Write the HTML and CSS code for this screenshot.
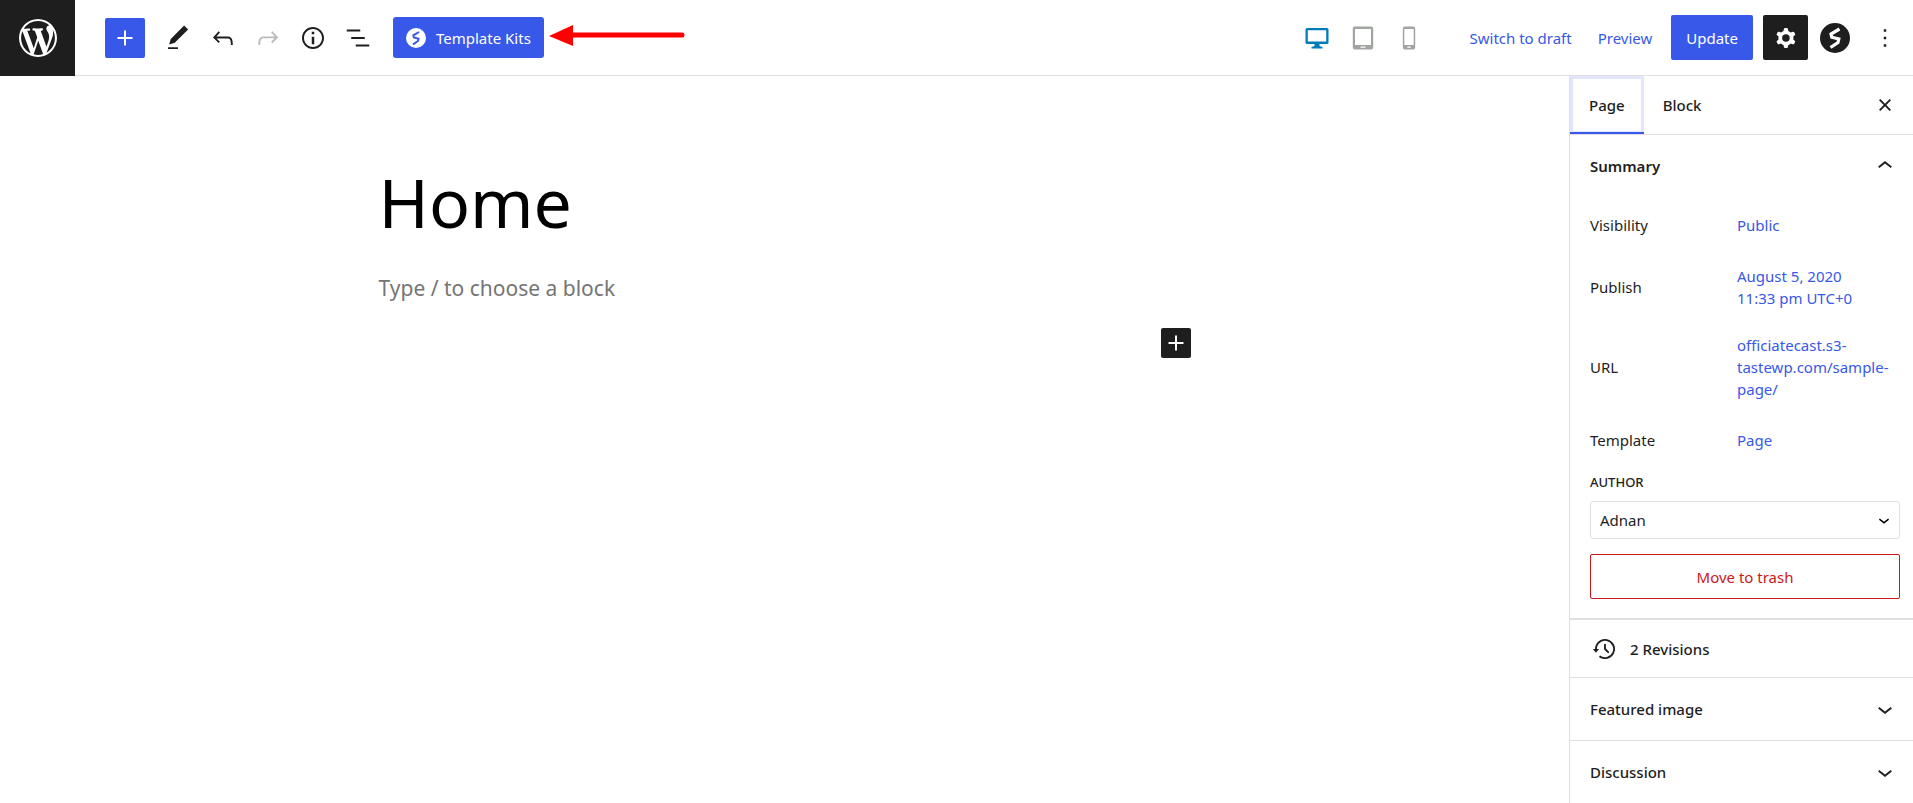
FILE: index.html
```html
<!DOCTYPE html>
<html lang="en">
<head>
    <meta charset="UTF-8">
    <meta name="viewport" content="width=device-width, initial-scale=1.0">
    <title>Edit Page</title>
    <link rel="stylesheet" href="styles.css">
</head>
<body>
    <header class="header">
        <a class="site-logo" href="#" aria-label="View Pages">
            <svg width="38" height="38" viewBox="0 0 20 20"><path d="M20 10c0-5.51-4.49-10-10-10C4.48 0 0 4.49 0 10c0 5.52 4.48 10 10 10 5.51 0 10-4.48 10-10zM7.78 15.37L4.37 6.22c.55-.02 1.17-.08 1.17-.08.5-.06.44-1.13-.06-1.11 0 0-1.45.11-2.37.11-.18 0-.37 0-.58-.01C4.12 2.69 6.87 1.11 10 1.11c2.33 0 4.45.87 6.05 2.34-.68-.11-1.65.39-1.65 1.58 0 .74.45 1.36.9 2.1.35.61.55 1.36.55 2.46 0 1.49-1.4 5-1.4 5l-3.03-8.37c.54-.02.82-.17.82-.17.5-.05.44-1.25-.06-1.22 0 0-1.44.12-2.38.12-.87 0-2.33-.12-2.33-.12-.5-.03-.56 1.2-.06 1.22l.92.08 1.26 3.41zM17.41 10c.24-.64.74-1.87.43-4.25.7 1.29 1.05 2.71 1.05 4.25 0 3.29-1.73 6.24-4.4 7.78.97-2.59 1.94-5.2 2.92-7.78zM6.1 18.09C3.12 16.65 1.11 13.53 1.11 10c0-1.3.23-2.48.72-3.59C3.25 10.3 4.67 14.2 6.1 18.09zm4.03-6.63l2.58 6.98c-.86.29-1.76.45-2.71.45-.79 0-1.57-.11-2.29-.33.81-2.38 1.62-4.74 2.42-7.1z"/></svg>
        </a>

        <div class="tools">
            <button class="inserter" aria-label="Add block">
                <svg class="icon" viewBox="0 0 24 24"><path d="M18 11.2h-5.2V6h-1.6v5.2H6v1.6h5.2V18h1.6v-5.2H18z"/></svg>
            </button>
            <button class="tool" aria-label="Tools">
                <svg class="icon" viewBox="0 0 24 24"><path d="M20.1 5.1L16.9 2 6.2 12.7l-1.3 4.4 4.5-1.3L20.1 5.1zM4 20.8h8v-1.5H4v1.5z"/></svg>
            </button>
            <button class="tool" aria-label="Undo">
                <svg class="icon" viewBox="0 0 24 24"><path d="M18.3 11.7c-.6-.6-1.4-.9-2.3-.9H6.7l2.9-3.3-1.1-1-4.5 5L8.5 16l1-1-2.7-2.7H16c.5 0 .9.2 1.3.5 1 1 1 3.4 1 4.5v.3h1.5v-.2c0-1.5 0-4.3-1.5-5.7z"/></svg>
            </button>
            <button class="tool tool-off" aria-label="Redo">
                <svg class="icon" viewBox="0 0 24 24"><path d="M15.6 6.5l-1.1 1 2.9 3.3H8c-.9 0-1.7.3-2.3.9-1.4 1.5-1.4 4.2-1.4 5.6v.2h1.5v-.3c0-1.1 0-3.5 1-4.5.3-.3.7-.5 1.3-.5h9.2L14.5 15l1.1 1.1 4.6-4.6-4.6-5z"/></svg>
            </button>
            <button class="tool" aria-label="Details">
                <svg class="icon" viewBox="0 0 24 24"><path d="M12 3.2c-4.8 0-8.8 3.9-8.8 8.8 0 4.8 3.9 8.8 8.8 8.8 4.8 0 8.8-3.9 8.8-8.8 0-4.8-4-8.8-8.8-8.8zm0 16c-4 0-7.2-3.3-7.2-7.2C4.8 8 8 4.8 12 4.8s7.2 3.3 7.2 7.2c0 4-3.2 7.2-7.2 7.2zM11 17h2v-6h-2v6zm0-8h2V7h-2v2z"/></svg>
            </button>
            <button class="tool" aria-label="List View">
                <svg class="icon" viewBox="0 0 24 24"><path d="M13.8 5.2H3v1.5h10.8V5.2zm-3.6 12v1.5H21v-1.5H10.2zm7.2-6H6.6v1.5h10.8v-1.5z"/></svg>
            </button>
        </div>

        <div class="kits">
            <button class="kits-button">
                <svg width="20" height="20" viewBox="0 0 30 30"><circle cx="15" cy="15" r="15" fill="#fff"/><path d="M19.5 6L11 11l.8 3.2 7 1.8-.8 3.5-7.5 5" fill="none" stroke="#3858e9" stroke-width="3"/></svg>
                Template Kits
            </button>
            <svg class="arrow" width="138" height="22" viewBox="0 0 138 22"><path d="M1 11L25 0v21z" fill="#f00"/><path d="M24 10h110" stroke="#f00" stroke-width="5" stroke-linecap="round"/></svg>
        </div>

        <div class="devices">
            <button class="tool" aria-label="Desktop">
                <svg width="24" height="24" viewBox="0 0 24 24" fill="#007cba"><path fill-rule="evenodd" d="M2 2h20a1.5 1.5 0 0 1 1.5 1.5v13A1.5 1.5 0 0 1 22 18h-7.5v2l3 1v1.5h-11V21l3-1v-2H2A1.5 1.5 0 0 1 .5 16.5v-13A1.5 1.5 0 0 1 2 2zm.8 2.3v11.2h18.4V4.3z"/></svg>
            </button>
            <button class="tool" aria-label="Tablet">
                <svg width="24" height="24" viewBox="0 0 24 24" fill="#a0a5a0"><path fill-rule="evenodd" d="M4 .5h16a2.2 2.2 0 0 1 2.2 2.2v18.6a2.2 2.2 0 0 1-2.2 2.2H4a2.2 2.2 0 0 1-2.2-2.2V2.7A2.2 2.2 0 0 1 4 .5zM4 3v16h16V3zm5.5 17.5v1.2h5v-1.2z"/></svg>
            </button>
            <button class="tool" aria-label="Mobile">
                <svg width="24" height="24" viewBox="0 0 24 24" fill="#a0a5a0"><path fill-rule="evenodd" d="M8 .5h8a2.2 2.2 0 0 1 2.2 2.2v18.6a2.2 2.2 0 0 1-2.2 2.2H8a2.2 2.2 0 0 1-2.2-2.2V2.7A2.2 2.2 0 0 1 8 .5zM7.3 3v16h9.4V3zm3 17.5v1.2h3.4v-1.2z"/></svg>
            </button>
        </div>

        <div class="actions">
            <div class="links">
                <button class="link-button">Switch to draft</button>
                <button class="link-button">Preview</button>
            </div>
            <button class="update">Update</button>
            <button class="settings" aria-label="Settings">
                <svg class="icon" viewBox="0 0 24 24"><path fill-rule="evenodd" d="M10.289 4.836A1 1 0 0111.275 4h1.306a1 1 0 01.987.836l.244 1.466c.787.26 1.503.679 2.108 1.218l1.393-.522a1 1 0 011.216.437l.653 1.13a1 1 0 01-.23 1.273l-1.148.944a6.025 6.025 0 010 2.435l1.149.946a1 1 0 01.23 1.272l-.653 1.13a1 1 0 01-1.216.437l-1.394-.522c-.605.54-1.32.958-2.108 1.218l-.244 1.466a1 1 0 01-.987.836h-1.306a1 1 0 01-.986-.836l-.244-1.466a5.995 5.995 0 01-2.108-1.218l-1.394.522a1 1 0 01-1.217-.436l-.653-1.131a1 1 0 01.23-1.272l1.149-.946a6.026 6.026 0 010-2.435l-1.148-.944a1 1 0 01-.23-1.272l.653-1.131a1 1 0 011.217-.437l1.393.522a5.994 5.994 0 012.108-1.218l.244-1.466zM14.929 12a3 3 0 11-6 0 3 3 0 016 0z"/></svg>
            </button>
            <button class="plugin" aria-label="Template Kits settings">
                <svg width="30" height="30" viewBox="0 0 30 30"><circle cx="15" cy="15" r="15" fill="#1e1e1e"/><path d="M19.5 6L11 11l.8 3.2 7 1.8-.8 3.5-7.5 5" fill="none" stroke="#fff" stroke-width="3.2"/></svg>
            </button>
            <button class="more" aria-label="Options">
                <svg class="icon" viewBox="0 0 24 24"><path d="M13 19h-2v-2h2v2zm0-6h-2v-2h2v2zm0-6h-2V5h2v2z"/></svg>
            </button>
        </div>
    </header>

    <div class="editor">
        <main class="canvas">
            <div class="content">
                <h1>Home</h1>
                <p class="placeholder">Type / to choose a block</p>
                <button class="block-adder" aria-label="Add block">
                    <svg class="icon" viewBox="0 0 24 24"><path d="M18 11.2h-5.2V6h-1.6v5.2H6v1.6h5.2V18h1.6v-5.2H18z"/></svg>
                </button>
            </div>
        </main>

        <aside class="sidebar">
            <div class="tabs">
                <button class="tab tab-active">Page</button>
                <button class="tab">Block</button>
                <button class="close" aria-label="Close settings">
                    <svg class="icon" viewBox="0 0 24 24"><path d="M12 13.06l3.712 3.713 1.061-1.06L13.061 12l3.712-3.712-1.06-1.06L12 10.938 8.288 7.227l-1.061 1.06L10.939 12l-3.712 3.712 1.06 1.061L12 13.061z"/></svg>
                </button>
            </div>

            <section class="summary">
                <button class="panel-toggle">
                    Summary
                    <svg class="icon" viewBox="0 0 24 24"><path d="M6.5 12.4L12 8l5.5 4.4-.9 1.2L12 10l-4.5 3.6-1-1.2z"/></svg>
                </button>
                <div class="rows">
                    <div class="row">
                        <span>Visibility</span>
                        <a href="#">Public</a>
                    </div>
                    <div class="row">
                        <span>Publish</span>
                        <a href="#">August 5, 2020<br>11:33 pm UTC+0</a>
                    </div>
                    <div class="row">
                        <span>URL</span>
                        <a href="#">officiatecast.s3-<br>tastewp.com/sample-<br>page/</a>
                    </div>
                    <div class="row">
                        <span>Template</span>
                        <a href="#">Page</a>
                    </div>
                </div>
                <label class="author-label" for="author">Author</label>
                <div class="select-wrap">
                    <select id="author" name="author">
                        <option selected>Adnan</option>
                    </select>
                    <svg class="select-arrow" width="22" height="22" viewBox="0 0 24 24"><path d="M17.5 11.6L12 16l-5.5-4.4.9-1.2L12 14l4.5-3.6 1 1.2z"/></svg>
                </div>
                <button class="trash">Move to trash</button>
            </section>

            <button class="revisions">
                <svg class="icon" viewBox="0 0 24 24"><path d="M5.5 12h1.75l-2.5 3-2.5-3H4a8 8 0 113.134 6.35l.907-1.194A6.5 6.5 0 105.5 12zm9.53 1.97l-2.28-2.28V8.5a.75.75 0 00-1.5 0V12a.747.747 0 00.218.529l1.282-.84-1.28.842 2.5 2.5a.75.75 0 101.06-1.061z"/></svg>
                2 Revisions
            </button>
            <button class="panel-toggle panel-closed">
                Featured image
                <svg class="icon" viewBox="0 0 24 24"><path d="M17.5 11.6L12 16l-5.5-4.4.9-1.2L12 14l4.5-3.6 1 1.2z"/></svg>
            </button>
            <button class="panel-toggle panel-closed">
                Discussion
                <svg class="icon" viewBox="0 0 24 24"><path d="M17.5 11.6L12 16l-5.5-4.4.9-1.2L12 14l4.5-3.6 1 1.2z"/></svg>
            </button>
        </aside>
    </div>
</body>
</html>
```
FILE: styles.css
```css
* {
    box-sizing: border-box;
}
body {
    margin: 0;
    height: 100vh;
    display: flex;
    flex-direction: column;
    overflow: hidden;
    font-family: "Noto Sans", "Open Sans", sans-serif;
    font-size: 15px;
    line-height: 22px;
    color: #1e1e1e;
    background: #fff;
}
button {
    display: flex;
    align-items: center;
    justify-content: center;
    padding: 0;
    border: none;
    border-radius: 2px;
    background: none;
    color: inherit;
    font: inherit;
    cursor: pointer;
}
a {
    color: #3858e9;
    text-decoration: none;
}
svg {
    display: block;
    flex-shrink: 0;
}
.icon {
    width: 30px;
    height: 30px;
    fill: currentColor;
}

/* Top bar */
.header {
    display: flex;
    align-items: center;
    flex-shrink: 0;
    height: 76px;
    border-bottom: 1px solid #e0e0e0;
}
.site-logo {
    display: flex;
    align-items: center;
    justify-content: center;
    width: 75px;
    height: 76px;
    background: #1e1e1e;
}
.site-logo svg {
    fill: #fff;
}
.tools {
    display: flex;
    align-items: center;
    margin-left: 30px;
}
.inserter {
    width: 40px;
    height: 40px;
    margin-right: 10px;
    background: #3858e9;
    color: #fff;
}
.tool {
    width: 45px;
    height: 45px;
}
.tool-off {
    color: #bbb;
}
.kits {
    position: relative;
    margin-left: 13px;
}
.kits-button {
    gap: 10px;
    height: 41px;
    padding: 0 13px;
    border-radius: 3px;
    background: #3858e9;
    color: #fff;
}
/* Callout pointing at the Template Kits button */
.arrow {
    position: absolute;
    left: 100%;
    top: 8px;
    margin-left: 4px;
}
.devices {
    display: flex;
    gap: 1px;
    margin-left: auto;
}
.actions {
    display: flex;
    align-items: center;
    margin-left: 38px;
    padding-right: 13px;
}
.links {
    display: flex;
    gap: 26px;
    margin-right: 19px;
}
.link-button {
    color: #3858e9;
}
.update {
    height: 45px;
    padding: 0 15px;
    background: #3858e9;
    color: #fff;
}
.settings {
    width: 45px;
    height: 45px;
    margin: 0 12px 0 10px;
    background: #1e1e1e;
    color: #fff;
}
.more {
    margin-left: 20px;
}

/* Canvas */
.editor {
    display: flex;
    flex: 1;
    min-height: 0;
}
.canvas {
    flex: 1;
    padding: 78px 20px 0;
}
.content {
    display: flex;
    flex-direction: column;
    max-width: 812px;
    margin: 0 auto;
}
h1 {
    margin: 0;
    font-size: 68px;
    font-weight: 400;
    line-height: 96px;
    color: #000;
}
.placeholder {
    margin: 22px 0 24px;
    font-size: 21px;
    line-height: 32px;
    color: #757575;
}
.block-adder {
    align-self: flex-end;
    background: #1e1e1e;
    color: #fff;
}

/* Settings sidebar */
.sidebar {
    width: 344px;
    border-left: 1px solid #e0e0e0;
    overflow: hidden;
}
.tabs {
    display: flex;
    height: 59px;
    border-bottom: 1px solid #e0e0e0;
}
.tab {
    padding: 0 19px;
    border-radius: 0;
    font-weight: 500;
}
.tab-active {
    box-shadow: inset 0 -2px #3858e9, inset 0 0 0 3px #e1e6fc;
}
.close {
    margin: 0 13px 0 auto;
}
.summary {
    padding: 0 13px 19px 20px;
    border-bottom: 2px solid #e0e0e0;
}
.panel-toggle {
    justify-content: space-between;
    width: 100%;
    height: 63px;
    font-weight: 500;
}
.summary .panel-toggle {
    height: 62px;
    font-weight: 600;
}
.rows {
    display: flex;
    flex-direction: column;
    gap: 10px;
    margin-top: 5px;
}
.row {
    display: grid;
    grid-template-columns: 147px 1fr;
    align-items: center;
    min-height: 45px;
    padding: 8px 0 7px;
}
.author-label {
    display: block;
    margin: 9px 0 8px;
    font-size: 13px;
    font-weight: 500;
    text-transform: uppercase;
}
.select-wrap {
    position: relative;
}
select {
    appearance: none;
    display: block;
    width: 100%;
    height: 38px;
    padding: 0 9px;
    border: 1px solid #e0e0e0;
    border-radius: 3px;
    background: #fff;
    color: inherit;
    font: inherit;
}
.select-arrow {
    position: absolute;
    right: 5px;
    top: 8px;
    pointer-events: none;
}
.trash {
    width: 100%;
    height: 45px;
    margin-top: 15px;
    border: 1px solid #cc1818;
    color: #cc1818;
}
.revisions {
    justify-content: flex-start;
    gap: 10px;
    width: 100%;
    height: 57px;
    padding: 0 20px;
    font-weight: 500;
}
.panel-closed {
    padding: 0 13px 0 20px;
    border-top: 1px solid #e0e0e0;
    border-radius: 0;
}
```
